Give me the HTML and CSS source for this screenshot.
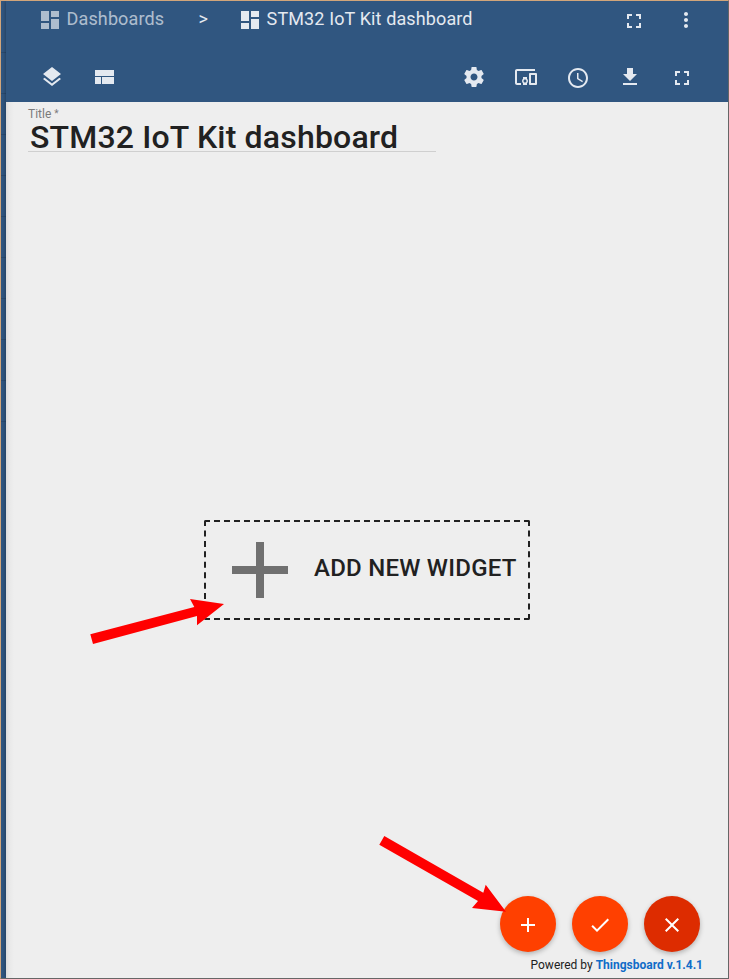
FILE: index.html
```html
<!DOCTYPE html>
<html lang="en">
<head>
<meta charset="utf-8">
<title>STM32 IoT Kit dashboard</title>
<link rel="stylesheet" href="styles.css">
</head>
<body>
<div class="app">
  <aside class="sidenav"><i></i><i></i><i></i><i></i><i></i><i></i><i></i><i></i><i></i><i></i></aside>
  <div class="page">
    <header class="header">
      <div class="breadcrumb">
        <a class="crumb crumb-link"><svg class="icon" viewBox="0 0 24 24"><path d="M3 13h8V3H3v10zm0 8h8v-6H3v6zm10 0h8V11h-8v10zm0-18v6h8V3h-8z"/></svg><span class="crumb-text">Dashboards</span></a>
        <span class="separator">&gt;</span>
        <span class="crumb"><svg class="icon" viewBox="0 0 24 24"><path d="M3 13h8V3H3v10zm0 8h8v-6H3v6zm10 0h8V11h-8v10zm0-18v6h8V3h-8z"/></svg><span class="crumb-text">STM32 IoT Kit dashboard</span></span>
        <div class="actions">
          <svg class="icon low" viewBox="0 0 24 24"><path d="M7 14H5v5h5v-2H7v-3zm-2-4h2V7h3V5H5v5zm12 7h-3v2h5v-5h-2v3zM14 5v2h3v3h2V5h-5z"/></svg>
          <svg class="icon" viewBox="0 0 24 24"><path d="M12 8c1.1 0 2-.9 2-2s-.9-2-2-2-2 .9-2 2 .9 2 2 2zm0 2c-1.1 0-2 .9-2 2s.9 2 2 2 2-.9 2-2-.9-2-2-2zm0 6c-1.1 0-2 .9-2 2s.9 2 2 2 2-.9 2-2-.9-2-2-2z"/></svg>
        </div>
      </div>
      <div class="toolbar">
        <svg class="icon" viewBox="0 0 24 24"><path d="M11.99 18.54l-7.37-5.73L3 14.07l9 7 9-7-1.63-1.27-7.38 5.74zM12 16l7.36-5.73L21 9l-9-7-9 7 1.63 1.27L12 16z"/></svg>
        <svg class="icon" viewBox="0 0 24 24"><path d="M3 19h6v-7H3v7zm7 0h12v-7H10v7zM3 5v6h19V5H3z"/></svg>
        <div class="actions">
          <svg class="icon" viewBox="0 0 24 24"><path d="M19.43 12.98c.04-.32.07-.64.07-.98s-.03-.66-.07-.98l2.11-1.65c.19-.15.24-.42.12-.64l-2-3.46c-.12-.22-.39-.3-.61-.22l-2.49 1c-.52-.4-1.08-.73-1.69-.98l-.38-2.65C14.46 2.18 14.25 2 14 2h-4c-.25 0-.46.18-.49.42l-.38 2.65c-.61.25-1.17.59-1.69.98l-2.49-1c-.23-.09-.49 0-.61.22l-2 3.46c-.13.22-.07.49.12.64l2.11 1.65c-.04.32-.07.65-.07.98s.03.66.07.98l-2.11 1.65c-.19.15-.24.42-.12.64l2 3.46c.12.22.39.3.61.22l2.49-1c.52.4 1.08.73 1.69.98l.38 2.65c.03.24.24.42.49.42h4c.25 0 .46-.18.49-.42l.38-2.65c.61-.25 1.17-.59 1.69-.98l2.49 1c.23.09.49 0 .61-.22l2-3.46c.12-.22.07-.49-.12-.64l-2.11-1.65zM12 15.5c-1.93 0-3.5-1.57-3.5-3.5s1.57-3.5 3.5-3.5 3.5 1.57 3.5 3.5-1.57 3.5-3.5 3.5z"/></svg>
          <svg class="icon" viewBox="0 0 24 24"><path d="M3 6h18V4H3c-1.1 0-2 .9-2 2v12c0 1.1.9 2 2 2h4v-2H3V6zm10 6H9v1.78c-.61.55-1 1.33-1 2.22s.39 1.67 1 2.22V20h4v-1.78c.61-.55 1-1.34 1-2.22s-.39-1.67-1-2.22V12zm-2 5.5c-.83 0-1.5-.67-1.5-1.5s.67-1.5 1.5-1.5 1.5.67 1.5 1.5-.67 1.5-1.5 1.5zM22 8h-6c-.5 0-1 .5-1 1v10c0 .5.5 1 1 1h6c.5 0 1-.5 1-1V9c0-.5-.5-1-1-1zm-1 10h-4v-8h4v8z"/></svg>
          <svg class="icon low" viewBox="0 0 24 24"><path d="M11.99 2C6.47 2 2 6.48 2 12s4.47 10 9.99 10C17.52 22 22 17.52 22 12S17.52 2 11.99 2zM12 20c-4.42 0-8-3.58-8-8s3.58-8 8-8 8 3.58 8 8-3.58 8-8 8zm.5-13H11v6l5.25 3.15.75-1.23-4.5-2.67z"/></svg>
          <svg class="icon" viewBox="0 0 24 24"><path d="M19 9h-4V3H9v6H5l7 7 7-7zM5 18v2h14v-2H5z"/></svg>
          <svg class="icon low" viewBox="0 0 24 24"><path d="M7 14H5v5h5v-2H7v-3zm-2-4h2V7h3V5H5v5zm12 7h-3v2h5v-5h-2v3zM14 5v2h3v3h2V5h-5z"/></svg>
        </div>
      </div>
    </header>
    <main class="content">
      <div class="title-field">
        <span class="label">Title <sup>*</sup></span>
        <div class="title-value">STM32 IoT Kit dashboard</div>
      </div>
      <div class="stage">
        <button class="add-widget">
          <svg class="plus" viewBox="0 0 96 96"><path d="M76 52H52v24h-8V52H20v-8h24V20h8v24h24v8z"/></svg>
          <span class="add-text">ADD NEW WIDGET</span>
        </button>
      </div>
      <div class="fabs">
        <button class="fab"><svg viewBox="0 0 24 24"><path d="M19 13h-6v6h-2v-6H5v-2h6V5h2v6h6v2z"/></svg></button>
        <button class="fab"><svg viewBox="0 0 24 24"><path d="M9 16.17L4.83 12l-1.42 1.41L9 19 21 7l-1.41-1.41z"/></svg></button>
        <button class="fab close"><svg viewBox="0 0 24 24"><path d="M19 6.41L17.59 5 12 10.59 6.41 5 5 6.41 10.59 12 5 17.59 6.41 19 12 13.41 17.59 19 19 17.59 13.41 12z"/></svg></button>
      </div>
      <footer class="footer">Powered by <a>Thingsboard v.1.4.1</a></footer>
    </main>
  </div>
  <svg class="arrows" viewBox="0 0 729 979">
    <path d="M90.3 634.3L194.3 607 190 599 224 604 197 625.3V616L93 644z"/>
    <path d="M384.3 836L483.3 892.7 485.7 884.7 506 911.7 472 908 478 901 379.3 844.7z"/>
  </svg>
</div>
</body>
</html>
```
FILE: styles.css
```css
* { box-sizing: border-box; }
body { margin: 0; font-family: Roboto, sans-serif; color: #212121; }
button { font: inherit; color: inherit; padding: 0; border: 0; background: none; }
.app {
  position: relative;
  display: flex;
  width: 729px;
  height: 979px;
  border: 1px solid #666;
  border-top-color: #d1a57a;
  border-left-color: #d1a57a;
  background: #eee;
  overflow: hidden;
}
.sidenav { width: 5px; flex: none; background: #305680; padding-top: 11px; }
.sidenav i { display: block; height: 41px; border-bottom: 1px solid #294b70; }
.page {
  flex: 1;
  display: flex;
  flex-direction: column;
  background: #eee;
  box-shadow: 0 0 4px rgba(0, 0, 0, .4);
}
.header { flex: none; height: 101px; background: #305680; color: #e4e9f0; }
.breadcrumb { display: flex; height: 58px; padding: 7px 30px 0 32px; }
.crumb { display: flex; }
.crumb-link { opacity: .7; width: 160px; }
.crumb-text { margin-left: 4.6px; font-size: 18px; line-height: 22px; white-space: nowrap; letter-spacing: .12px; }
.separator { width: 40px; padding-left: .6px; font-size: 18px; line-height: 22px; }
.icon { display: block; flex: none; width: 24px; height: 24px; fill: currentColor; }
.low { margin-top: 1px; }
.actions { display: flex; gap: 28px; margin-left: auto; }
.toolbar { display: flex; gap: 28px; padding: 6px 34px 0; }
.content {
  flex: 1;
  display: flex;
  flex-direction: column;
  background: linear-gradient(90deg, #dcdcdc, #e8e8e8 3px, #eee 8px);
}
.title-field { width: 408px; height: 50px; margin-left: 22px; border-bottom: 1px solid #cfcfcf; padding-top: 4px; }
.label { display: block; font-size: 12px; line-height: 16px; color: #7b7b7b; }
.label sup { font-size: 10px; line-height: 0; vertical-align: 1px; }
.title-value { padding-left: 2px; font-size: 32px; font-weight: 500; line-height: 30px; letter-spacing: .18px; white-space: nowrap; }
.stage { flex: 1; padding: 368px 0 0 198px; }
.add-widget {
  display: flex;
  align-items: center;
  width: 326px;
  height: 100px;
  border: 2px dashed #212121;
  border-radius: 2px;
}
.plus { width: 96px; height: 96px; margin-left: 5.5px; flex: none; fill: #707070; }
.add-text { margin: -5px 0 0 6.5px; font-size: 24px; font-weight: 500; letter-spacing: .24px; white-space: nowrap; }
.fabs { display: flex; justify-content: flex-end; gap: 16px; padding-right: 28px; }
.fab {
  display: grid;
  place-items: center;
  width: 56px;
  height: 56px;
  border-radius: 50%;
  background: #ff4000;
  padding-top: 2px;
  box-shadow: 0 2px 5px rgba(0, 0, 0, .26);
}
.fab svg { width: 24px; height: 24px; fill: #fff; }
.fab.close { background: #dd2c00; }
.footer { height: 26px; padding: 5px 25px 0 0; text-align: right; font-size: 12px; line-height: 16px; }
.footer a { color: #106cc8; font-weight: 700; }
.arrows { position: absolute; left: -1px; top: -1px; width: 729px; height: 979px; fill: #f00; pointer-events: none; }
```
